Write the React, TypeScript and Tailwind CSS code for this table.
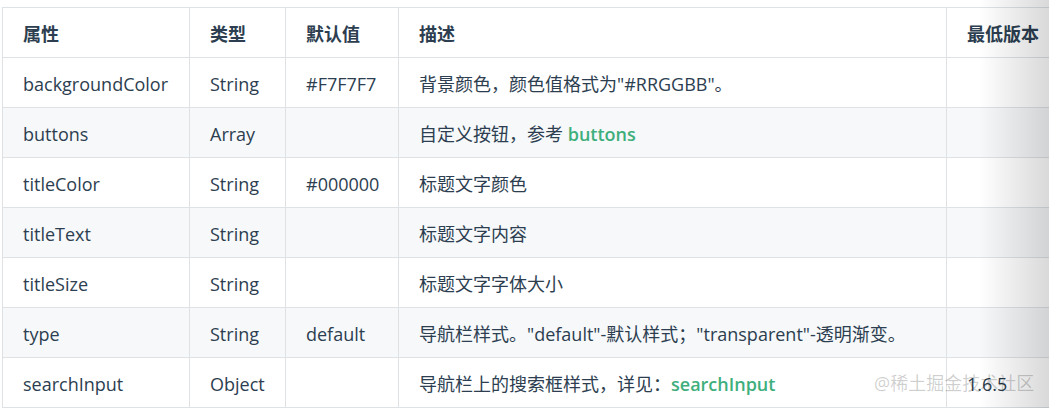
import React from "react";

type Row = {
  name: string;
  type: string;
  def: string;
  desc: React.ReactNode;
  version: string;
};

const Link = ({ children }: { children: React.ReactNode }) => (
  <span className="font-semibold text-[#3eaf7c]">{children}</span>
);

const rows: Row[] = [
  {
    name: "backgroundColor",
    type: "String",
    def: "#F7F7F7",
    desc: '背景颜色，颜色值格式为"#RRGGBB"。',
    version: "",
  },
  {
    name: "buttons",
    type: "Array",
    def: "",
    desc: (
      <>
        自定义按钮，参考 <Link>buttons</Link>
      </>
    ),
    version: "",
  },
  { name: "titleColor", type: "String", def: "#000000", desc: "标题文字颜色", version: "" },
  { name: "titleText", type: "String", def: "", desc: "标题文字内容", version: "" },
  { name: "titleSize", type: "String", def: "", desc: "标题文字字体大小", version: "" },
  {
    name: "type",
    type: "String",
    def: "default",
    desc: '导航栏样式。"default"-默认样式；"transparent"-透明渐变。',
    version: "",
  },
  {
    name: "searchInput",
    type: "Object",
    def: "",
    desc: (
      <>
        导航栏上的搜索框样式，详见：<Link>searchInput</Link>
      </>
    ),
    version: "1.6.5",
  },
];

const cell =
  "h-[50px] border border-[#dfe2e5] pl-5 pr-4 pt-[3px] leading-none text-left align-middle whitespace-nowrap";

export default function App() {
  return (
    <div
      className="relative h-[408px] w-[1049px] overflow-hidden bg-white text-[18px] text-[#2c3e50]"
      style={{ fontFamily: '"Open Sans", "Noto Sans CJK SC", sans-serif' }}
    >
      <table className="ml-[2px] mt-[7px] w-[1200px] table-fixed border-collapse">
        <colgroup>
          <col className="w-[187px]" />
          <col className="w-[96px]" />
          <col className="w-[113px]" />
          <col className="w-[548px]" />
          <col className="w-[256px]" />
        </colgroup>
        <thead>
          <tr>
            {["属性", "类型", "默认值", "描述", "最低版本"].map((h) => (
              <th key={h} className={`${cell} font-bold`}>
                {h}
              </th>
            ))}
          </tr>
        </thead>
        <tbody>
          {rows.map((r, i) => (
            <tr key={r.name} className={i % 2 === 1 ? "bg-[#f6f8fa]" : "bg-white"}>
              <td className={cell}>{r.name}</td>
              <td className={cell}>{r.type}</td>
              <td className={cell}>{r.def}</td>
              <td className={cell}>{r.desc}</td>
              <td className={cell}>{r.version}</td>
            </tr>
          ))}
        </tbody>
      </table>

      {/* scroll shadow on the right edge */}
      <div className="pointer-events-none absolute right-0 top-0 h-full w-[70px] bg-gradient-to-r from-transparent to-black/15" />

      {/* watermark */}
      <div className="pointer-events-none absolute left-[874px] top-[374px] text-[18px] leading-none text-black/20">
        @稀土掘金技术社区
      </div>
    </div>
  );
}
